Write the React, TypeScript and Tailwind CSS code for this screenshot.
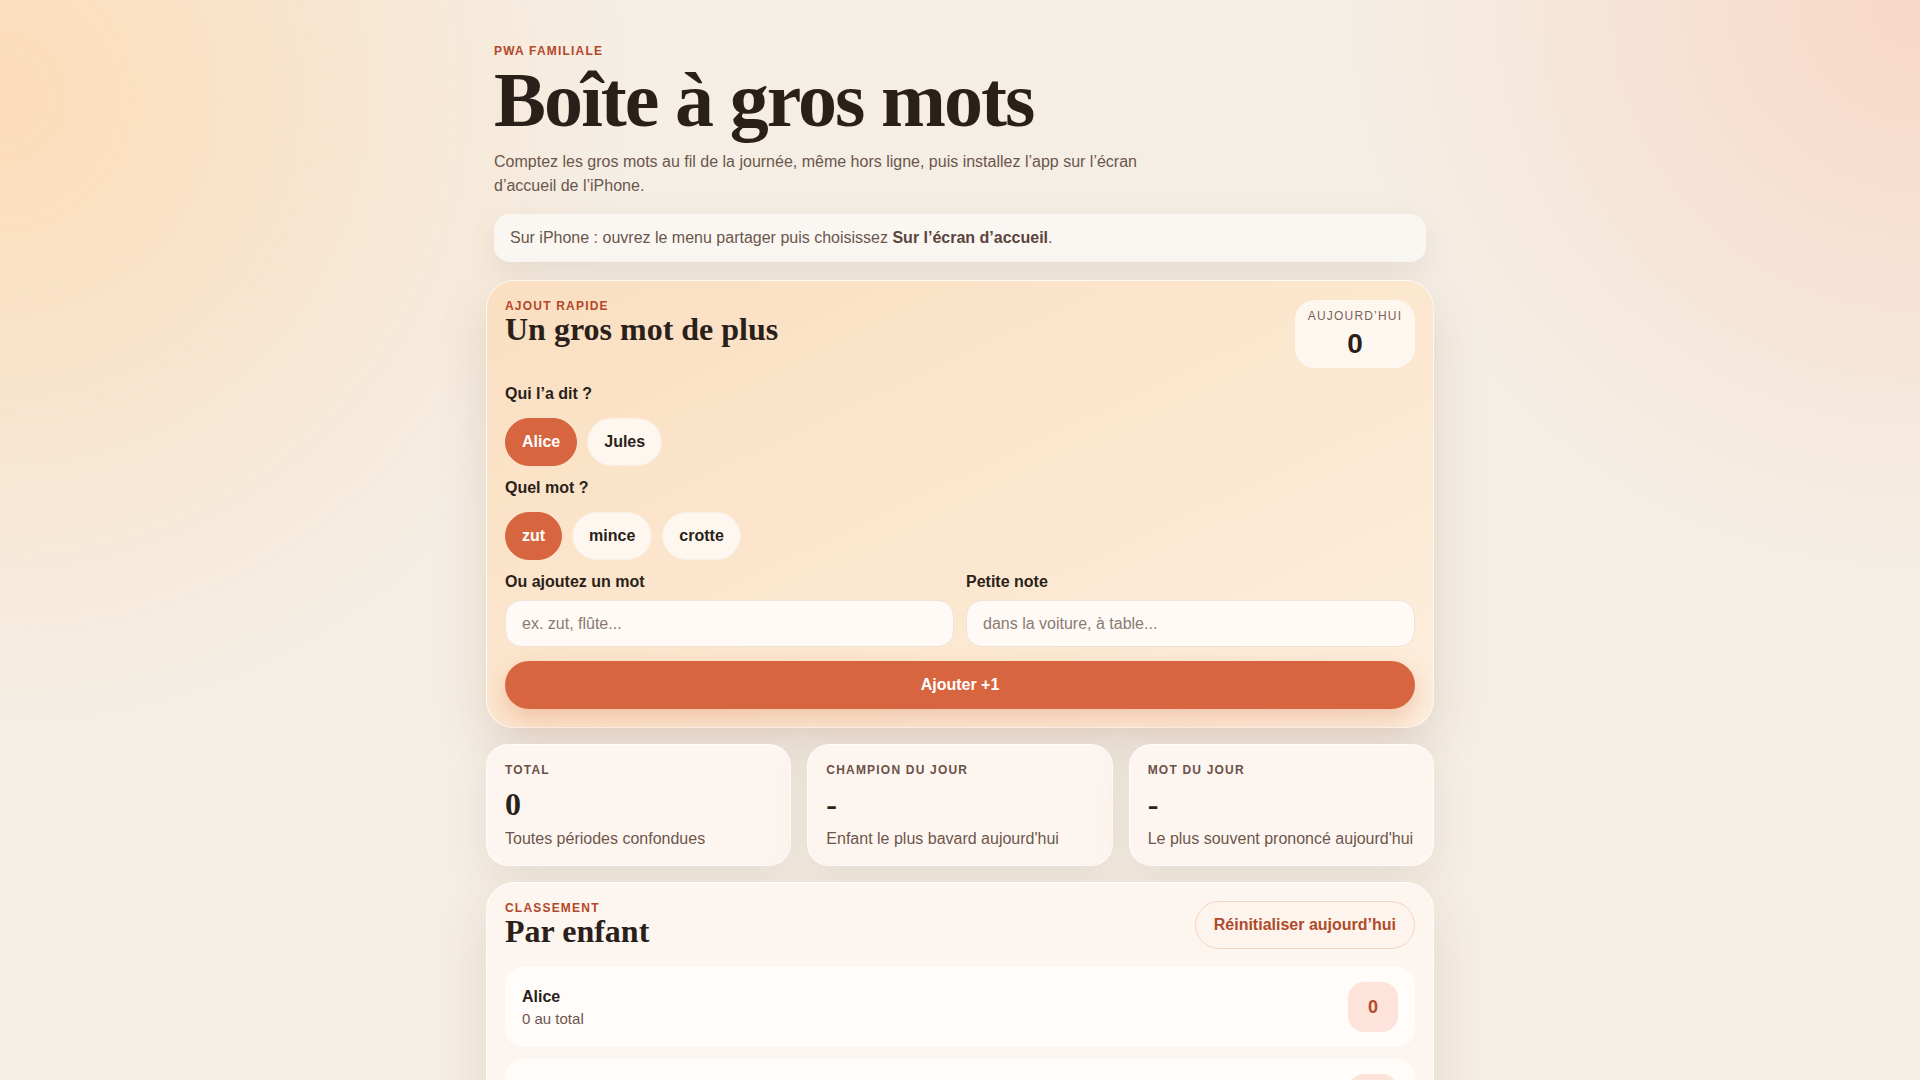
import { useState } from 'react';

const sans = 'font-["Liberation_Sans",Arial,sans-serif]';
const serif = 'font-["Liberation_Serif","Times_New_Roman",serif]';

const kids = ['Alice', 'Jules'];
const words = ['zut', 'mince', 'crotte'];

function Chip({ label, active, onClick }: { label: string; active: boolean; onClick: () => void }) {
  return (
    <button
      onClick={onClick}
      className={`rounded-full border px-4 py-[11px] text-base font-bold leading-6 ${
        active
          ? 'border-[#d7653f] bg-[#d7653f] text-white'
          : 'border-[#fbeee2] bg-[#fef7f0] text-[#2b1f1a]'
      }`}
    >
      {label}
    </button>
  );
}

function StatCard({ title, value, hint }: { title: string; value: string; hint: string }) {
  return (
    <div className="rounded-[22px] border border-white/70 bg-[#fdf6f0] px-[18px] pb-[14px] pt-[19px] shadow-[0_14px_40px_rgba(110,75,50,0.10)]">
      <div className="text-xs font-bold uppercase leading-none tracking-widest text-[#6b5048]">{title}</div>
      <div className={`${serif} mt-[11px] text-[32px] font-bold leading-[1.1] text-[#2b1f1a]`}>{value}</div>
      <div className="mt-[5px] text-base leading-6 text-[#6e564c]">{hint}</div>
    </div>
  );
}

export default function App() {
  const [kid, setKid] = useState('Alice');
  const [word, setWord] = useState('zut');
  const [customWord, setCustomWord] = useState('');
  const [note, setNote] = useState('');

  return (
    <div
      className={`${sans} min-h-screen bg-[#f5eee5] bg-[image:radial-gradient(circle_at_0%_8%,#fcdcb8_0%,rgba(252,220,184,0)_28%),radial-gradient(circle_at_100%_0%,#f8d8c6_0%,rgba(248,216,198,0)_25%)] pb-16 text-[#2b1f1a]`}
    >
      <div className="mx-auto w-[948px]">
        {/* Hero */}
        <header className="px-2 pt-[45px]">
          <div className="text-xs font-bold uppercase leading-none tracking-widest text-[#b5472a]">PWA familiale</div>
          <h1 className={`${serif} mt-1 text-[78px] font-bold leading-none tracking-tight text-[#2b1f1a]`}>
            Boîte à gros mots
          </h1>
          <p className="mt-[11px] max-w-2xl text-base leading-6 text-[#6b564c]">
            Comptez les gros mots au fil de la journée, même hors ligne, puis installez l’app sur l’écran d’accueil de
            l’iPhone.
          </p>
          <div className="mt-4 rounded-2xl bg-[#faf6f1] px-4 py-3 text-base leading-6 text-[#6b564c] shadow-[0_10px_30px_rgba(110,75,50,0.10)]">
            Sur iPhone : ouvrez le menu partager puis choisissez{' '}
            <strong className="font-bold text-[#5a453c]">Sur l’écran d’accueil</strong>.
          </div>
        </header>

        <main className="mt-[18px] flex flex-col gap-4">
          {/* Quick add */}
          <section className="rounded-[28px] border border-white/70 bg-gradient-to-br from-[#fadfc1] to-[#fdeedc] px-[18px] pb-[18px] pt-[19px] shadow-[0_20px_50px_rgba(120,80,50,0.16)]">
            <div className="flex items-start justify-between">
              <div>
                <div className="text-xs font-bold uppercase leading-none tracking-widest text-[#b5472a]">Ajout rapide</div>
                <h2 className={`${serif} text-[32px] font-bold leading-[1.1]`}>Un gros mot de plus</h2>
              </div>
              <div className="w-[120px] rounded-[20px] bg-[#fef7f0] px-2 pb-1.5 pt-2 text-center">
                <div className="text-xs uppercase leading-4 tracking-widest text-[#7a6258]">Aujourd’hui</div>
                <div className="mt-0.5 text-[28px] font-bold leading-9 text-[#2b1f1a]">0</div>
              </div>
            </div>

            <div className="mt-3.5 text-base font-bold leading-6">Qui l’a dit ?</div>
            <div className="mt-3 flex gap-2.5">
              {kids.map((k) => (
                <Chip key={k} label={k} active={kid === k} onClick={() => setKid(k)} />
              ))}
            </div>

            <div className="mt-2.5 text-base font-bold leading-6">Quel mot ?</div>
            <div className="mt-3 flex gap-2.5">
              {words.map((w) => (
                <Chip key={w} label={w} active={word === w} onClick={() => setWord(w)} />
              ))}
            </div>

            <div className="mt-2.5 grid grid-cols-2 gap-3">
              <label className="block">
                <span className="block text-base font-bold leading-6">Ou ajoutez un mot</span>
                <input
                  value={customWord}
                  onChange={(e) => setCustomWord(e.target.value)}
                  placeholder="ex. zut, flûte..."
                  className="mt-1.5 h-[47px] w-full rounded-2xl border border-[#efe2d7] bg-[#fffaf5] px-4 text-base text-[#2b1f1a] placeholder-[#8a7a72] outline-none"
                />
              </label>
              <label className="block">
                <span className="block text-base font-bold leading-6">Petite note</span>
                <input
                  value={note}
                  onChange={(e) => setNote(e.target.value)}
                  placeholder="dans la voiture, à table..."
                  className="mt-1.5 h-[47px] w-full rounded-2xl border border-[#efe2d7] bg-[#fffaf5] px-4 text-base text-[#2b1f1a] placeholder-[#8a7a72] outline-none"
                />
              </label>
            </div>

            <button className="mt-3.5 h-12 w-full rounded-full bg-[#d7653f] text-base font-bold text-white shadow-[0_10px_24px_rgba(215,101,63,0.28)]">
              Ajouter +1
            </button>
          </section>

          {/* Stats */}
          <div className="grid grid-cols-3 gap-4">
            <StatCard title="Total" value="0" hint="Toutes périodes confondues" />
            <StatCard title="Champion du jour" value="-" hint="Enfant le plus bavard aujourd'hui" />
            <StatCard title="Mot du jour" value="-" hint="Le plus souvent prononcé aujourd'hui" />
          </div>

          {/* Ranking */}
          <section className="rounded-[28px] border border-white/70 bg-[#fdf6f0] p-[18px] shadow-[0_20px_50px_rgba(120,80,50,0.14)]">
            <div className="flex items-center justify-between">
              <div>
                <div className="text-xs font-bold uppercase leading-none tracking-widest text-[#b5472a]">Classement</div>
                <h2 className={`${serif} text-[32px] font-bold leading-[1.1]`}>Par enfant</h2>
              </div>
              <button className="rounded-full border border-[#f4d3c2] bg-[#fdf4ee] px-[18px] py-[11px] text-base font-bold leading-6 text-[#b04a2a]">
                Réinitialiser aujourd’hui
              </button>
            </div>

            <div className="mt-4.5 flex flex-col gap-3">
              {kids.map((k) => (
                <div
                  key={k}
                  className="flex items-center justify-between rounded-[18px] border border-[#fffcfa] bg-[#fffcfa] px-4 py-3.5"
                >
                  <div>
                    <div className="text-base font-bold leading-6">{k}</div>
                    <div className="text-[15px] leading-5 text-[#6e564c]">0 au total</div>
                  </div>
                  <div className="flex h-[50px] w-[50px] items-center justify-center rounded-2xl bg-[#fde3d9] text-lg font-bold text-[#b04a2a]">
                    0
                  </div>
                </div>
              ))}
            </div>
          </section>
        </main>
      </div>
    </div>
  );
}
